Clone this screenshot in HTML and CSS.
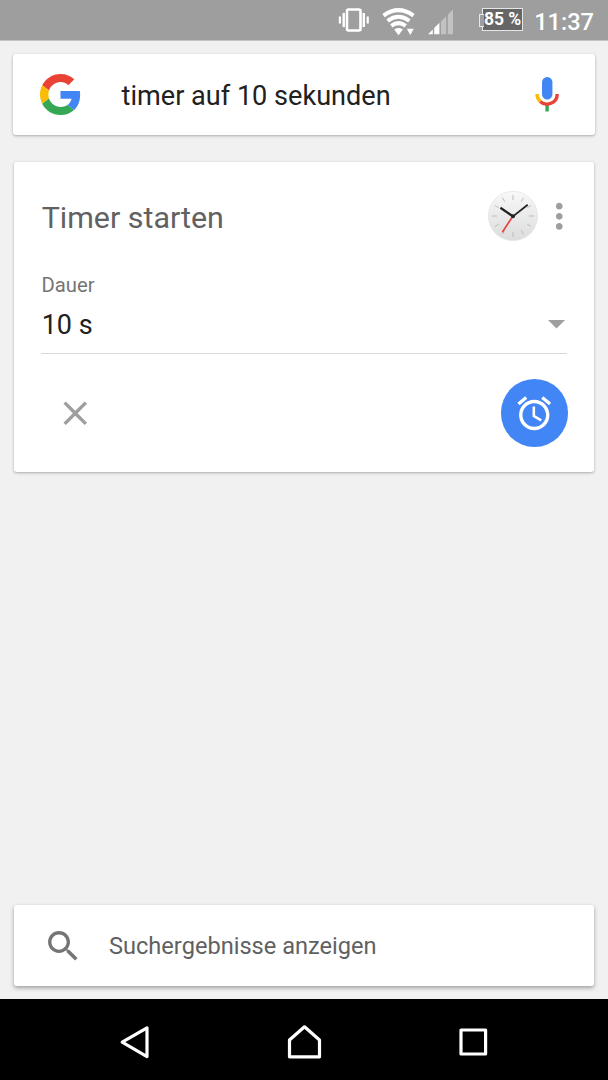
FILE: index.html
```html
<!DOCTYPE html>
<html lang="de">
<head>
    <meta charset="UTF-8">
    <meta name="viewport" content="width=device-width, initial-scale=1.0">
    <title>Timer starten</title>
    <link rel="stylesheet" href="styles.css">
</head>
<body>
    <div class="status-bar">
        <svg class="vibrate" viewBox="0 0 32 24">
            <rect x="9" y="1.5" width="13.5" height="21" rx="1.5" fill="none" stroke="#fff" stroke-width="2.6"/>
            <path d="M5.7 5v14M25.8 5v14" stroke="#fff" stroke-width="2.4"/>
            <path d="M1.9 8.5v7M29.7 8.5v7" stroke="#fff" stroke-width="2.2"/>
        </svg>
        <svg class="wifi" viewBox="0 0 34 28">
            <g fill="none" stroke="#fff" stroke-width="4">
                <path d="M1.5 7.6Q16.5 -3.4 31.5 7.6"/>
                <path d="M5.6 12.8Q16.5 4.7 27.4 12.8"/>
                <path d="M9.3 17.8Q16.5 12.4 23.7 17.8"/>
            </g>
            <path d="M12.2 21.4Q16.5 18.6 20.8 21.4L16.5 27.2z" fill="#fff"/>
            <path d="M24.8 20.8h7l-3.5 6.2z" fill="#fff"/>
        </svg>
        <svg class="signal" viewBox="0 0 26 26">
            <path d="M0 25.3 4.8 20.6v4.7zM6.2 19l5.2-5.2v11.5H6.2z" fill="#fff"/>
            <path d="M13 12.4 18.2 7.2v18.1H13zM19.8 5.6 25 .4v24.9h-5.2z" fill="#c2c2c2"/>
        </svg>
        <div class="battery">85 %</div>
        <div class="clock">11:37</div>
    </div>

    <div class="content">
        <div class="card search">
            <svg class="google" viewBox="0 0 48 48">
                <path fill="#EA4335" d="M24 9.5c3.54 0 6.71 1.22 9.21 3.6l6.85-6.85C35.9 2.38 30.47 0 24 0 14.62 0 6.51 5.38 2.56 13.22l7.98 6.19C12.43 13.72 17.74 9.5 24 9.5z"/>
                <path fill="#4285F4" d="M46.98 24.55c0-1.57-.15-3.09-.38-4.55H24v9.02h12.94c-.58 2.96-2.26 5.48-4.78 7.18l7.73 6c4.51-4.18 7.09-10.36 7.09-17.65z"/>
                <path fill="#FBBC05" d="M10.53 28.59c-.48-1.45-.76-2.99-.76-4.59s.27-3.14.76-4.59l-7.98-6.19C.92 16.46 0 20.12 0 24c0 3.88.92 7.54 2.56 10.78l7.97-6.19z"/>
                <path fill="#34A853" d="M24 48c6.48 0 11.93-2.13 15.89-5.81l-7.73-6c-2.15 1.45-4.92 2.3-8.16 2.3-6.26 0-11.57-4.22-13.47-9.91l-7.98 6.19C6.51 42.62 14.62 48 24 48z"/>
            </svg>
            <div class="query">timer auf 10 sekunden</div>
            <svg class="mic" viewBox="0 0 24 35">
                <rect x="7" y="0" width="10.4" height="22.4" rx="5.2" fill="#4285F4"/>
                <path d="M12.1 28v6.5" stroke="#34A853" stroke-width="3.4"/>
                <path d="M2 17A10.1 10.1 0 0 0 5.2 24.4" fill="none" stroke="#FBBC05" stroke-width="3.4"/>
                <path d="M5.2 24.4A10.1 10.1 0 0 0 22.2 17" fill="none" stroke="#EA4335" stroke-width="3.4"/>
            </svg>
        </div>

        <div class="card timer">
            <div class="timer-head">
                <h1>Timer starten</h1>
                <svg class="face" viewBox="0 0 50 50">
                    <defs>
                        <linearGradient id="dial" x1="0" y1="0" x2="0" y2="1">
                            <stop offset="0" stop-color="#f8f8f8"/>
                            <stop offset="1" stop-color="#dcdcdc"/>
                        </linearGradient>
                    </defs>
                    <circle cx="25" cy="25" r="24.6" fill="url(#dial)" stroke="#e4e4e4" stroke-width=".8"/>
                    <path d="M25 4v5M25 41v5M4 25h5M41 25h5M14.5 6.8l2.3 4M33.2 39.2l2.3 4M35.5 6.8l-2.3 4M16.8 39.2l-2.3 4M6.8 14.5l4 2.3M39.2 33.2l4 2.3M43.2 14.5l-4 2.3M10.8 33.2l-4 2.3" stroke="#bdbdbd" stroke-width="1"/>
                    <path d="M25 25 14.3 41.2" stroke="#e8403a" stroke-width="1.6"/>
                    <path d="M25 25.4 12.4 16.8" stroke="#222" stroke-width="2.3"/>
                    <path d="M25 25.4 39.7 13.7" stroke="#222" stroke-width="1.8"/>
                    <circle cx="25" cy="25.2" r="2" fill="#222"/>
                </svg>
                <svg class="icon more" viewBox="0 0 24 24">
                    <path d="M12 8c1.1 0 2-.9 2-2s-.9-2-2-2-2 .9-2 2 .9 2 2 2zm0 2c-1.1 0-2 .9-2 2s.9 2 2 2 2-.9 2-2-.9-2-2-2zm0 6c-1.1 0-2 .9-2 2s.9 2 2 2 2-.9 2-2-.9-2-2-2z"/>
                </svg>
            </div>
            <div class="field">
                <div class="label">Dauer</div>
                <div class="value">
                    <span>10 s</span>
                    <svg class="arrow" viewBox="0 0 17 9"><path d="M0 0h17L8.5 8.5z"/></svg>
                </div>
            </div>
            <div class="actions">
                <svg class="icon close" viewBox="0 0 24 24">
                    <path d="M19 6.41 17.59 5 12 10.59 6.41 5 5 6.41 10.59 12 5 17.59 6.41 19 12 13.41 17.59 19 19 17.59 13.41 12z"/>
                </svg>
                <div class="alarm">
                    <svg class="icon" viewBox="0 0 24 24">
                        <path d="M22 5.72l-4.6-3.86-1.29 1.53 4.6 3.86L22 5.72zM7.88 3.39L6.6 1.86 2 5.71l1.29 1.53 4.59-3.85zM12.5 8H11v6l4.75 2.85.75-1.23-4-2.37V8zM12 4c-4.97 0-9 4.03-9 9s4.02 9 9 9c4.97 0 9-4.03 9-9s-4.03-9-9-9zm0 16c-3.87 0-7-3.13-7-7s3.13-7 7-7 7 3.13 7 7-3.13 7-7 7z"/>
                    </svg>
                </div>
            </div>
        </div>

        <div class="card results">
            <svg class="icon" viewBox="0 0 24 24">
                <path d="M15.5 14h-.79l-.28-.27C15.41 12.59 16 11.11 16 9.5 16 5.91 13.09 3 9.5 3S3 5.91 3 9.5 5.91 16 9.5 16c1.61 0 3.09-.59 4.23-1.57l.27.28v.79l5 4.99L20.49 19l-4.99-5zm-6 0C7.01 14 5 11.99 5 9.5S7.01 5 9.5 5 14 7.01 14 9.5 11.99 14 9.5 14z"/>
            </svg>
            <span>Suchergebnisse anzeigen</span>
        </div>
    </div>

    <div class="nav-bar">
        <svg viewBox="0 0 34 36"><path d="M29 3.9v28.7L4.2 18.2z"/></svg>
        <svg viewBox="0 0 34 36"><path d="M2.5 32.8V16L17.5 2.8l15 13.2v16.8z"/></svg>
        <svg viewBox="0 0 34 36"><path d="M5 6h24.6v24H5z"/></svg>
    </div>
</body>
</html>
```
FILE: styles.css
```css
* {
    box-sizing: border-box;
}
body {
    margin: 0;
    height: 1080px;
    display: flex;
    flex-direction: column;
    background-color: #f1f1f1;
    font-family: Roboto, sans-serif;
    overflow: hidden;
}
svg {
    display: block;
    flex: none;
    overflow: visible;
}
.icon {
    width: 40.5px;
    height: 40.5px;
}

/* status bar */
.status-bar {
    height: 41px;
    padding-right: 14px;
    display: flex;
    justify-content: flex-end;
    align-items: flex-start;
    background-color: #9e9e9e;
    border-bottom: 1px solid #c4c4c4;
    color: #fff;
}
.vibrate {
    width: 32px;
    height: 24px;
    margin: 8px 12px 0 0;
}
.wifi {
    width: 34px;
    height: 28px;
    margin: 8px 12px 0 0;
}
.signal {
    width: 26px;
    height: 26px;
    margin: 9px 28px 0 0;
}
.battery {
    position: relative;
    width: 41px;
    height: 23px;
    margin: 8px 11px 0 0;
    border: 1.5px solid #e6e6e6;
    background-color: #666;
    font-size: 17.5px;
    font-weight: 700;
    line-height: 21px;
    text-align: center;
    white-space: nowrap;
}
.battery::before {
    content: "";
    position: absolute;
    left: -4px;
    top: 5px;
    width: 4px;
    height: 11px;
    border: 1px solid #e6e6e6;
    border-right: 0;
    background-color: #9e9e9e;
}
.clock {
    margin-top: 8px;
    font-size: 23.6px;
    font-weight: 500;
    line-height: 28px;
}

/* cards */
.content {
    flex: 1;
    display: flex;
    flex-direction: column;
    padding: 13px 14px;
}
.card {
    background-color: #fff;
    border-radius: 3px;
    box-shadow: 0 1px 3px rgba(0, 0, 0, 0.3);
}
.search {
    height: 81px;
    margin: 0 -1px 27px;
    padding: 0 36px 0 27px;
    display: flex;
    align-items: center;
}
.google {
    width: 41px;
    height: 41px;
}
.query {
    flex: 1;
    margin: 2px 0 0 40.6px;
    font-size: 27.1px;
    line-height: 32px;
    color: #212121;
}
.mic {
    width: 24px;
    height: 35px;
}
.timer {
    height: 310px;
    padding: 29px 27px 0;
}
.timer-head {
    display: flex;
    align-items: center;
    height: 50px;
}
.timer-head h1 {
    flex: 1;
    margin: 3px 0 0 0.7px;
    font-size: 30.4px;
    font-weight: 400;
    line-height: 36px;
    color: #616161;
}
.face {
    width: 50px;
    height: 50px;
}
.more {
    margin: 0 -12.5px 0 1.5px;
    fill: #9e9e9e;
}
.field {
    margin-top: 32px;
    border-bottom: 1.7px solid #d9d9d9;
}
.label {
    padding-left: 0.5px;
    font-size: 20.25px;
    line-height: 24px;
    color: #757575;
}
.value {
    display: flex;
    justify-content: space-between;
    align-items: center;
    height: 56px;
    padding: 0 2px 0 0.7px;
    font-size: 27px;
    color: #212121;
}
.arrow {
    width: 17px;
    height: 9px;
    margin-bottom: 2px;
    fill: #9e9e9e;
}
.actions {
    display: flex;
    justify-content: space-between;
    align-items: center;
    margin: 25.4px -1px 0 14px;
}
.close {
    fill: #9e9e9e;
}
.alarm {
    display: flex;
    align-items: center;
    justify-content: center;
    width: 67.5px;
    height: 67.5px;
    border-radius: 50%;
    background-color: #4285f4;
    fill: #fff;
}
.results {
    height: 81px;
    margin-top: auto;
    padding: 1px 0 0 29px;
    display: flex;
    align-items: center;
    gap: 25.5px;
    font-size: 23.6px;
    color: #616161;
    fill: #757575;
    box-shadow: 0 2px 4px rgba(0, 0, 0, 0.35);
}

/* navigation keys */
.nav-bar {
    height: 81px;
    padding: 0 118px;
    display: flex;
    justify-content: space-between;
    align-items: center;
    background-color: #000;
}
.nav-bar svg {
    width: 34px;
    height: 36px;
    margin-top: 5px;
    fill: none;
    stroke: #fff;
    stroke-width: 3.2;
    stroke-linejoin: round;
}
```
